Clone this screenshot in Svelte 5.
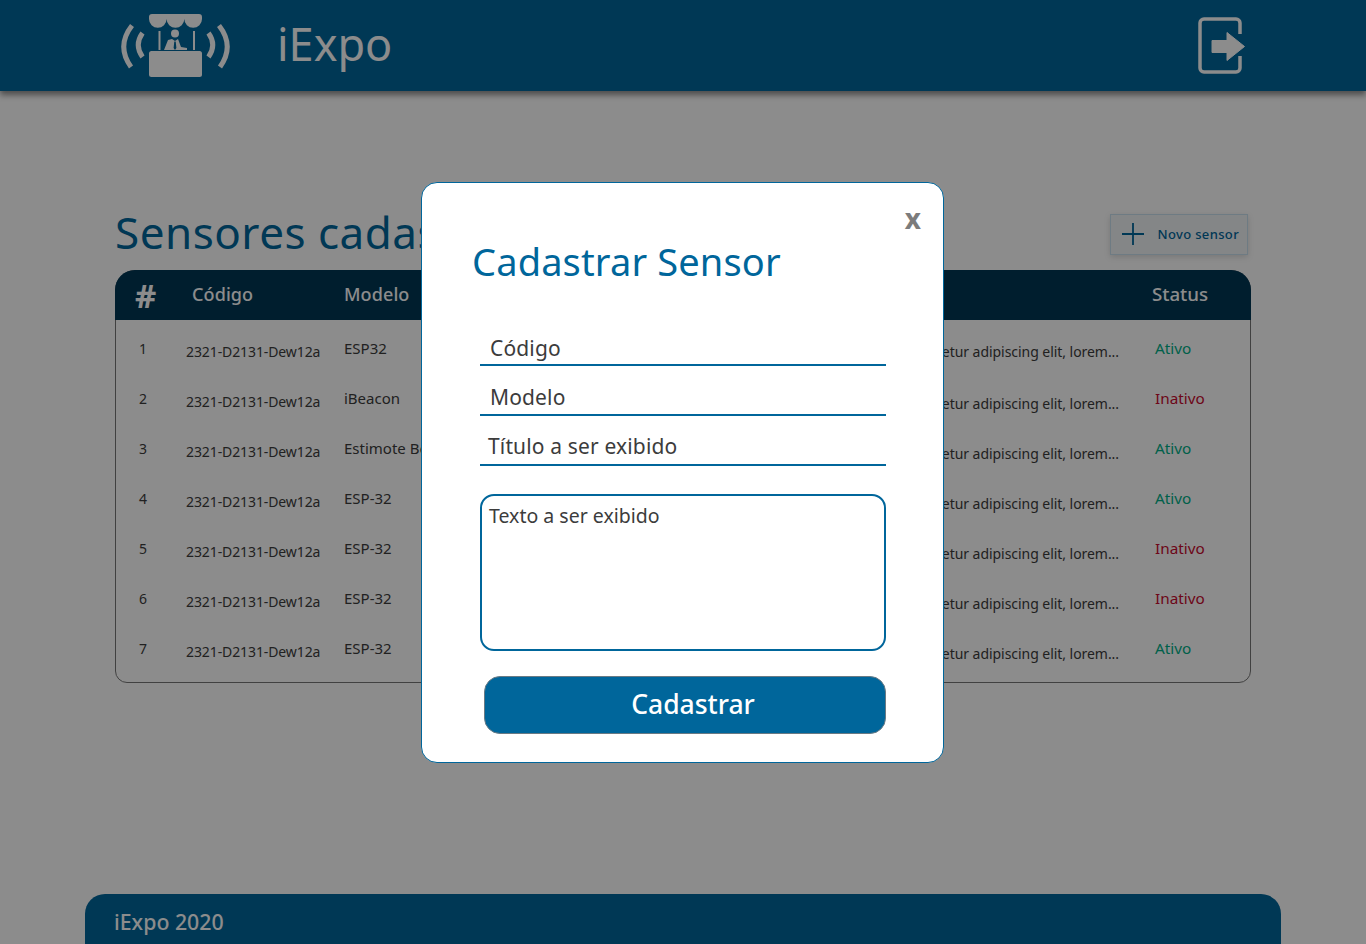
<script lang="ts">
	const text = 'Lorem ipsum dolor sit amet, consectetur adipiscing elit, lorem...';

	const sensors = [
		{ id: 1, code: '2321-D2131-Dew12a', model: 'ESP32', active: true },
		{ id: 2, code: '2321-D2131-Dew12a', model: 'iBeacon', active: false },
		{ id: 3, code: '2321-D2131-Dew12a', model: 'Estimote Beacon', active: true },
		{ id: 4, code: '2321-D2131-Dew12a', model: 'ESP-32', active: true },
		{ id: 5, code: '2321-D2131-Dew12a', model: 'ESP-32', active: false },
		{ id: 6, code: '2321-D2131-Dew12a', model: 'ESP-32', active: false },
		{ id: 7, code: '2321-D2131-Dew12a', model: 'ESP-32', active: true }
	];
</script>

<div class="page">
	<header class="topbar">
		<div class="brand">
			<svg class="logo" viewBox="120 12 112 66" width="112" height="66" aria-hidden="true">
				<g fill="none" stroke="#fff" stroke-width="5">
					<path d="M132 25.500Q116 46 131 67" />
					<path d="M142.500 33Q134 45 142.500 57" />
					<path d="M219 25.500Q235 46 220 67" />
					<path d="M208.500 33Q217 45 208.500 57" />
				</g>
				<g fill="#fff">
					<path d="M152 14H199a3 3 0 0 1 3 3v2a8.800 8.800 0 0 1-17.700 0a8.800 8.800 0 0 1-17.700 0a8.800 8.800 0 0 1-17.600 0v-2a3 3 0 0 1 3-3z" />
					<rect x="149" y="51" width="53" height="26" rx="2.500" />
					<rect x="158.500" y="31" width="2" height="19" />
					<rect x="193" y="31" width="2" height="19" />
					<circle cx="175" cy="33.500" r="4" />
					<path d="M172 39L175 41 178 39 181 47 187 48V50H164L168 40zM174.300 41.500L173.600 48 175 50 176.400 48 175.700 41.500z" fill-rule="evenodd" />
				</g>
			</svg>
			<span class="brand-name">iExpo</span>
		</div>
		<svg class="logout" viewBox="0 0 48 58" width="48" height="58" aria-hidden="true">
			<path d="M42 17V6a4 4 0 0 0-4-4H6a4 4 0 0 0-4 4V51a4 4 0 0 0 4 4H38a4 4 0 0 0 4-4V39" fill="none" stroke="#fff" stroke-width="3.500" />
			<path d="M14 23.500H29V15.500L46.500 29.500 29 43.500V35.500H14z" fill="#fff" stroke="#fff" stroke-linejoin="round" />
		</svg>
	</header>

	<main class="content">
		<div class="title-row">
			<h1>Sensores cadastrados</h1>
			<button class="new-btn">
				<svg viewBox="0 0 24 24" width="24" height="24" aria-hidden="true">
					<path d="M12 1V23M1 12H23" stroke="#00669b" stroke-width="1.800" fill="none" />
				</svg>
				<span>Novo sensor</span>
			</button>
		</div>

		<div class="table">
			<div class="row head">
				<span class="hash">#</span>
				<span class="code">Código</span>
				<span class="model">Modelo</span>
				<span class="desc">Texto</span>
				<span class="status">Status</span>
			</div>
			{#each sensors as s}
				<div class="row">
					<span class="num">{s.id}</span>
					<span class="code">{s.code}</span>
					<span class="model">{s.model}</span>
					<span class="desc">{text}</span>
					<span class="status" class:on={s.active} class:off={!s.active}>{s.active ? 'Ativo' : 'Inativo'}</span>
				</div>
			{/each}
		</div>
	</main>

	<footer class="footer">iExpo 2020</footer>
</div>

<div class="overlay">
	<div class="modal">
		<button class="close">x</button>
		<h2>Cadastrar Sensor</h2>
		<div class="fields">
			<div class="field">Código</div>
			<div class="field">Modelo</div>
			<div class="field">Título a ser exibido</div>
		</div>
		<div class="area">Texto a ser exibido</div>
		<button class="submit">Cadastrar</button>
	</div>
</div>

<style>
	:global(body) {
		margin: 0;
		background: #fff;
		overflow: hidden;
	}

	.page {
		height: 944px;
		display: flex;
		flex-direction: column;
		font-family: 'Noto Sans', 'Open Sans', sans-serif;
		overflow: hidden;
	}

	.topbar {
		height: 91px;
		flex: none;
		background: #00669b;
		box-shadow: 0 4px 6px rgba(0, 0, 0, 0.45);
		display: flex;
		align-items: center;
		justify-content: space-between;
		padding: 0 120px;
	}

	.brand {
		display: flex;
		align-items: center;
		gap: 45px;
	}

	.logo,
	.logout {
		display: block;
	}

	.logo {
		margin-top: -1px;
	}

	.brand-name {
		color: #fff;
		font-size: 45px;
		line-height: 1;
		margin-top: -5px;
	}

	.content {
		flex: 1;
		padding: 123px 115px 0;
	}

	.title-row {
		display: flex;
		justify-content: space-between;
		align-items: flex-start;
		height: 56px;
		padding-right: 3px;
	}

	h1 {
		margin: 0;
		color: #00669b;
		font-size: 44px;
		font-weight: 400;
		letter-spacing: 0.5px;
		line-height: 36px;
		white-space: nowrap;
	}

	.new-btn {
		width: 138px;
		height: 41px;
		padding: 0 8px 2px 10px;
		display: flex;
		align-items: center;
		justify-content: space-between;
		background: #f0f4f6;
		border: 1px solid #c8e0ee;
		box-shadow: 0 2px 6px rgba(0, 0, 0, 0.15);
		color: #00669b;
		font: 500 13px 'Noto Sans', sans-serif;
		letter-spacing: 0.35px;
	}

	.table {
		width: 1136px;
		height: 413px;
		box-sizing: border-box;
		border: 1px solid #777;
		border-radius: 20px 20px 12px 12px;
		font-size: 14px;
		color: #3c3c3c;
	}

	.row {
		display: grid;
		grid-template-columns: 70px 158px 170px 605px 1fr;
		height: 50px;
		align-items: center;
	}

	.row.head {
		margin: -1px -1px 0;
		background: #003755;
		border-radius: 20px 20px 0 0;
		color: #fff;
		font-size: 18px;
		font-weight: 500;
	}

	.hash {
		padding-left: 20px;
		font-size: 33px;
		font-weight: 700;
		line-height: 1;
	}

	.num {
		padding: 7px 0 0 23px;
	}

	.row .code {
		padding-top: 12px;
		letter-spacing: -0.1px;
	}

	.row .model {
		padding-top: 5px;
		font-size: 15px;
	}

	.head .code,
	.head .model {
		padding: 0 0 2px 0;
		font-size: 18px;
		letter-spacing: 0.1px;
	}

	.head .code {
		padding-left: 7px;
	}

	.head .model {
		padding-left: 1px;
	}

	.desc {
		text-align: right;
		white-space: nowrap;
		padding-top: 16px;
		letter-spacing: -0.05px;
	}

	.row:nth-child(2) .desc {
		padding-top: 12px;
	}

	.head .desc {
		visibility: hidden;
	}

	.status {
		padding: 5px 0 0 36px;
		font-size: 15.300px;
	}

	.head .status {
		padding: 0 0 4px 34px;
		font-size: 18.700px;
	}

	.on {
		color: #00b088;
	}

	.off {
		color: #c80c30;
	}

	.footer {
		flex: none;
		height: 50px;
		margin: 0 85px;
		box-sizing: border-box;
		padding: 13px 0 0 29px;
		background: #00669b;
		border-radius: 20px 20px 0 0;
		color: #fff;
		font-size: 21.300px;
		font-weight: 500;
	}

	.overlay {
		position: fixed;
		inset: 0;
		background: rgba(0, 0, 0, 0.45);
		display: flex;
		align-items: center;
		justify-content: center;
		font-family: 'Noto Sans', 'Open Sans', sans-serif;
	}

	.modal {
		position: relative;
		width: 523px;
		height: 581px;
		margin-right: 1px;
		box-sizing: border-box;
		padding: 56px 57px 0 52px;
		background: #fff;
		border: 1px solid #00669b;
		border-radius: 16px;
	}

	.close {
		position: absolute;
		top: 16px;
		right: 22px;
		padding: 0;
		border: none;
		background: none;
		color: #7c7c7c;
		font: 700 28px 'Noto Sans', sans-serif;
	}

	h2 {
		margin: 0 0 51px -2px;
		color: #00669b;
		font-size: 38px;
		font-weight: 400;
		letter-spacing: 0.15px;
		line-height: 44px;
		white-space: nowrap;
	}

	.fields {
		margin-left: 6px;
		display: flex;
		flex-direction: column;
		gap: 18px;
	}

	.field {
		height: 30px;
		border-bottom: 2px solid #00669b;
		padding-left: 10px;
		font-size: 21px;
		line-height: 28px;
		color: #3c3c3c;
		letter-spacing: 0.15px;
	}

	.field:nth-child(2) {
		line-height: 26px;
	}

	.field:nth-child(3) {
		padding-left: 8px;
		line-height: 24px;
	}

	.area {
		margin: 28px 0 0 6px;
		height: 157px;
		box-sizing: border-box;
		padding: 7px 7px;
		border: 2px solid #00669b;
		border-radius: 14px;
		font-size: 19.500px;
		line-height: 26px;
		color: #3c3c3c;
	}

	.submit {
		display: block;
		width: 402px;
		height: 58px;
		margin: 25px 0 0 10px;
		background: #00669b;
		border: 1px solid #6a7a84;
		border-radius: 16px;
		color: #fff;
		font: 500 26.500px 'Noto Sans', sans-serif;
		padding: 0 0 2px 16px;
	}
</style>
